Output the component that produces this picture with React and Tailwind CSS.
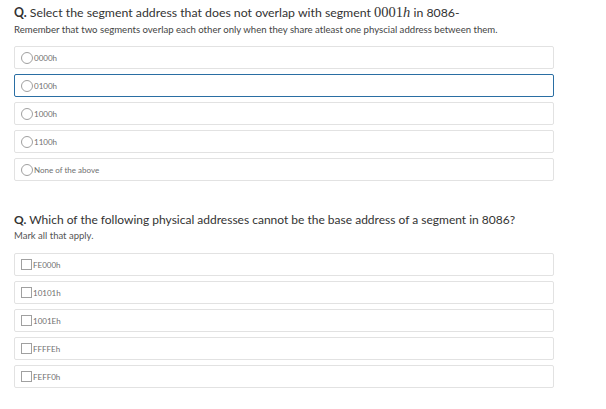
import React from 'react';

const radioOptions = ['0000h', '0100h', '1000h', '1100h', 'None of the above'];
const checkOptions = ['FE000h', '10101h', '1001Eh', 'FFFFEh', 'FEFF0h'];

const Option = ({ label, type, active }) => (
  <label
    className={`flex items-center h-[23px] px-[6px] bg-white rounded-[2px] border ${
      active ? 'border-[#2a6ea3]' : 'border-[#e2e2e2]'
    }`}
  >
    {type === 'radio' ? (
      <span className="w-[12px] h-[12px] rounded-full border border-[#a0a0a0] bg-white shrink-0" />
    ) : (
      <span className="w-[11px] h-[11px] border border-[#a0a0a0] bg-white shrink-0" />
    )}
    <span className="ml-[1px] text-[8px] text-[#6f6f6f] leading-none">{label}</span>
  </label>
);

export default function App() {
  return (
    <div
      className="min-h-screen bg-white text-[#333]"
      style={{ fontFamily: 'Lato, "Noto Sans", sans-serif' }}
    >
      <div className="w-[540px] ml-[14px] pt-[4px]">
        <h2 className="text-[12.3px] leading-[18px] text-[#333] whitespace-nowrap">
          <span className="font-bold">Q.</span> Select the segment address that does not overlap with segment{' '}
          <span className="text-[14.5px] leading-none" style={{ fontFamily: '"Liberation Serif", serif' }}>
            0001<i>h</i>
          </span>{' '}
          in 8086-
        </h2>
        <p className="text-[9.6px] leading-[12px] mt-[2px] text-[#444] whitespace-nowrap">
          Remember that two segments overlap each other only when they share atleast one physcial address between them.
        </p>
        <div className="mt-[10px] flex flex-col gap-[5px]">
          {radioOptions.map((o, i) => (
            <Option key={o} label={o} type="radio" active={i === 1} />
          ))}
        </div>

        <h2 className="mt-[30px] text-[12px] leading-[18px] text-[#333] whitespace-nowrap">
          <span className="font-bold">Q.</span> Which of the following physical addresses cannot be the base address of a segment in 8086?
        </h2>
        <p className="text-[9.5px] leading-[12px] mt-[1px] text-[#555]">Mark all that apply.</p>
        <div className="mt-[11px] flex flex-col gap-[5px]">
          {checkOptions.map((o) => (
            <Option key={o} label={o} type="check" />
          ))}
        </div>
      </div>
    </div>
  );
}
